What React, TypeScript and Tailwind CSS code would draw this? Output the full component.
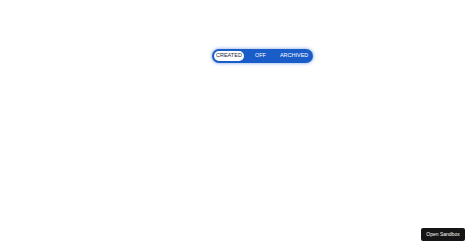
import { useState } from 'react'

const options = ['CREATED', 'OFF', 'ARCHIVED']

export default function App() {
  const [active, setActive] = useState('CREATED')

  return (
    <div className="relative h-[248px] w-[474px] bg-white font-['Liberation_Sans',Arial,sans-serif]">
      <div className="pl-[212px] pt-[49px]">
        <div className="flex h-[14px] w-[101px] items-center rounded-full bg-[#1a5cc8] px-[2px] shadow-[0_0_3px_1px_rgba(26,92,200,0.35)]">
          {options.map((opt) => (
            <button
              key={opt}
              onClick={() => setActive(opt)}
              className={
                opt === active
                  ? 'flex h-[10px] items-center rounded-full bg-white px-[2px] text-[5.5px] leading-none text-[#1c2a44]'
                  : 'flex h-[10px] items-center px-[2px] text-[5.5px] leading-none text-white'
              }
              style={{ marginLeft: opt === 'OFF' ? 9 : opt === 'ARCHIVED' ? 10 : 0 }}
            >
              {opt}
            </button>
          ))}
        </div>
      </div>
      <button className="absolute left-[421px] top-[228px] flex h-[13px] w-[44px] items-center justify-center rounded-[2px] bg-[#151515] text-[5px] leading-none text-white">
        Open Sandbox
      </button>
    </div>
  )
}
